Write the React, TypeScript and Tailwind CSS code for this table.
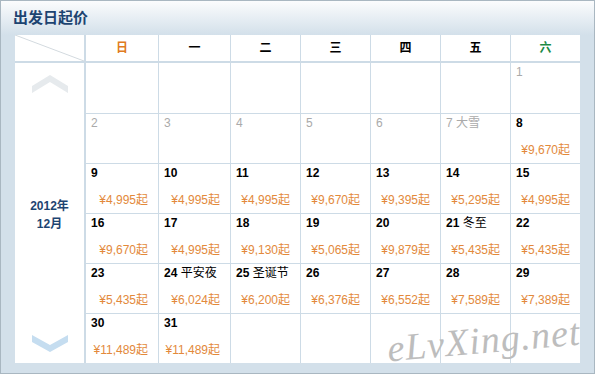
import React from 'react'

type Day = { d: number; grey?: boolean; fest?: string; price?: string }

const WEEK = [
  { t: '日', c: 'text-[#e07b22]' },
  { t: '一', c: 'text-black' },
  { t: '二', c: 'text-black' },
  { t: '三', c: 'text-black' },
  { t: '四', c: 'text-black' },
  { t: '五', c: 'text-black' },
  { t: '六', c: 'text-[#1b8a45]' },
]

const COL_W = ['w-[72px]', 'w-[72px]', 'w-[70px]', 'w-[70px]', 'w-[70px]', 'w-[70px]', 'w-[70px]']

const ROWS: (Day | null)[][] = [
  [null, null, null, null, null, null, { d: 1, grey: true }],
  [
    { d: 2, grey: true }, { d: 3, grey: true }, { d: 4, grey: true }, { d: 5, grey: true },
    { d: 6, grey: true }, { d: 7, grey: true, fest: '大雪' }, { d: 8, price: '¥9,670起' },
  ],
  [
    { d: 9, price: '¥4,995起' }, { d: 10, price: '¥4,995起' }, { d: 11, price: '¥4,995起' },
    { d: 12, price: '¥9,670起' }, { d: 13, price: '¥9,395起' }, { d: 14, price: '¥5,295起' },
    { d: 15, price: '¥4,995起' },
  ],
  [
    { d: 16, price: '¥9,670起' }, { d: 17, price: '¥4,995起' }, { d: 18, price: '¥9,130起' },
    { d: 19, price: '¥5,065起' }, { d: 20, price: '¥9,879起' }, { d: 21, fest: '冬至', price: '¥5,435起' },
    { d: 22, price: '¥5,435起' },
  ],
  [
    { d: 23, price: '¥5,435起' }, { d: 24, fest: '平安夜', price: '¥6,024起' },
    { d: 25, fest: '圣诞节', price: '¥6,200起' }, { d: 26, price: '¥6,376起' },
    { d: 27, price: '¥6,552起' }, { d: 28, price: '¥7,589起' }, { d: 29, price: '¥7,389起' },
  ],
  [{ d: 30, price: '¥11,489起' }, { d: 31, price: '¥11,489起' }, null, null, null, null, null],
]

function Cell({ day }: { day: Day | null }) {
  if (!day) return <div className="h-full" />
  return (
    <div className="flex h-full flex-col">
      <div className={`pl-[5px] pt-[2px] leading-[14px] text-[12px] ${day.grey ? 'text-[#aaaaaa]' : 'text-black'}`}>
        <span className={day.grey ? '' : 'font-bold'}>{day.d}</span>
        {day.fest && <span> {day.fest}</span>}
      </div>
      {day.price && (
        <div className="mt-auto pb-[6px] pr-[10px] text-right text-[12px] leading-[14px] text-[#e3893b]">
          {day.price}
        </div>
      )}
    </div>
  )
}

export default function App() {
  return (
    <div className="relative flex h-[374px] w-[595px] flex-col overflow-hidden border border-[#a9b7c1] bg-[#d3e0ea] font-['Liberation_Sans','Noto_Sans_CJK_SC',sans-serif]">
      <div className="h-[34px] bg-gradient-to-b from-[#fbfcfd] to-[#d3e0ea] pl-[12px] pt-[7px] text-[15px] font-bold leading-[19px] text-[#1d4471]">
        出发日起价
      </div>
      <div className="ml-[14px] flex h-[328px] w-[565px] bg-white">
        {/* side column */}
        <div className="flex w-[71px] flex-col border-r-2 border-[#cddbe6]">
          <div className="h-[28px] border-b-2 border-[#cddbe6]">
            <svg width="69" height="26" className="block">
              <line x1="0" y1="0" x2="69" y2="26" stroke="#d3dadf" strokeWidth="1" />
            </svg>
          </div>
          <div className="flex flex-1 flex-col items-center">
            <svg width="38" height="20" className="mt-[12px]">
              <polygon points="1,11 19,0 37,11 37,18 19,7 1,18" fill="#e6eaed" />
            </svg>
            <div className="mt-auto text-center text-[12px] font-bold leading-[18px] text-[#1d4471]">
              2012年
              <br />
              12月
            </div>
            <svg width="38" height="20" className="mb-[9px] mt-auto">
              <polygon points="1,1 19,11 37,1 37,8 19,18 1,8" fill="#c5ddf0" />
            </svg>
          </div>
        </div>
        {/* calendar */}
        <div className="flex flex-1 flex-col">
          <div className="flex h-[28px] border-b-2 border-[#cddbe6]">
            {WEEK.map((w, i) => (
              <div
                key={w.t}
                className={`${COL_W[i]} flex items-center justify-center text-[12px] font-bold ${w.c} ${i > 0 ? 'border-l border-[#cddbe6]' : ''}`}
              >
                {w.t}
              </div>
            ))}
          </div>
          {ROWS.map((row, r) => (
            <div key={r} className={`flex h-[50px] ${r > 0 ? 'border-t border-[#cddbe6]' : ''}`}>
              {row.map((day, i) => (
                <div key={i} className={`${COL_W[i]} h-full ${i > 0 ? 'border-l border-[#cddbe6]' : ''}`}>
                  <Cell day={day} />
                </div>
              ))}
            </div>
          ))}
        </div>
      </div>
      <div className="pointer-events-none absolute left-[386px] top-[318px] -rotate-[5deg] font-['Liberation_Serif',serif] text-[38px] italic leading-[42px] tracking-[1px] text-[#bdbdbd]">
        eLvXing.net
      </div>
    </div>
  )
}
